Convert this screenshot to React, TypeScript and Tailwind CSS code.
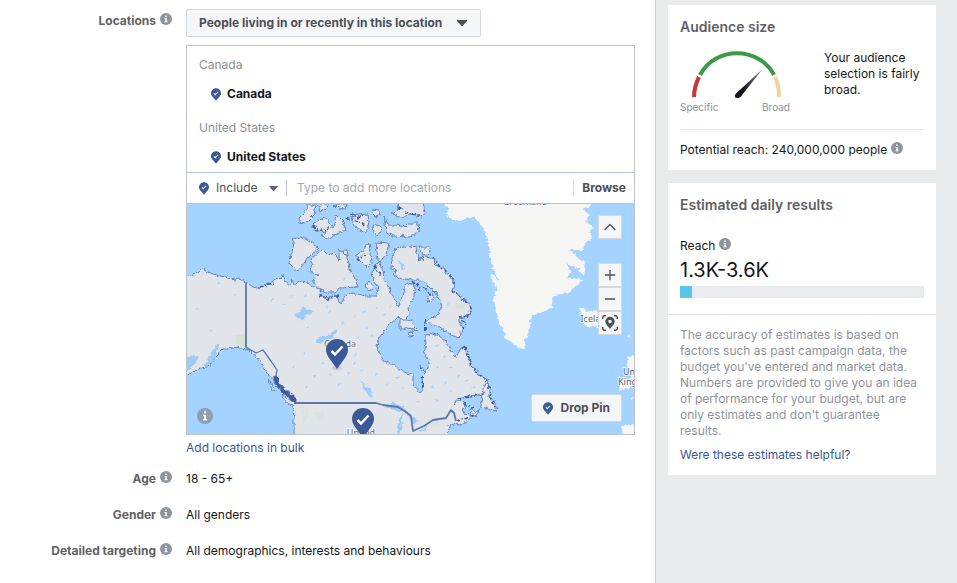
import React, { useState } from "react";
import { ChevronUp, Minus, Plus } from "lucide-react";

const locations = [
  { country: "Canada", name: "Canada" },
  { country: "United States", name: "United States" },
];

const targeting = [
  { label: "Age", value: "18 - 65+" },
  { label: "Gender", value: "All genders" },
  { label: "Detailed targeting", value: "All demographics, interests and behaviours" },
];

const dailyReach = { range: "1.3K-3.6K", percent: 5 };

const InfoIcon: React.FC<{ className?: string }> = ({ className }) => (
  <svg viewBox="0 0 12 12" className={className} aria-hidden="true">
    <circle cx="6" cy="6" r="6" fill="currentColor" />
    <path d="M4.6 5h2.2v3.3h.8v1H4.5v-1h.8V6h-.7zM5.2 2.5h1.6V4H5.2z" fill="#fff" />
  </svg>
);

const PinIcon: React.FC<{ className?: string }> = ({ className }) => (
  <svg viewBox="0 0 22 28" className={className} aria-hidden="true">
    <path
      d="M11 0C4.900 0 0 4.800 0 10.800c0 3 1.100 5.200 2.700 7.200L11 28l8.300-10c1.600-2 2.700-4.200 2.700-7.200C22 4.800 17.100 0 11 0z"
      fill="#3b5998"
    />
    <path d="M6.500 11.500l3 3 6-6.500" fill="none" stroke="#fff" strokeWidth="2.400" />
  </svg>
);

const CaretIcon: React.FC<{ className?: string }> = ({ className }) => (
  <svg viewBox="0 0 10 6" className={className} aria-hidden="true">
    <path d="M0 0h10v1L5.500 6h-1L0 1z" fill="currentColor" />
  </svg>
);

const LocateIcon: React.FC = () => (
  <svg viewBox="0 0 16 16" className="size-4" aria-hidden="true">
    <path
      d="M.8 4V2.500C.8 1.500 1.500.8 2.500.8H4M12 .8h1.500c1 0 1.700.7 1.700 1.700V4M15.200 12v1.500c0 1-.7 1.700-1.700 1.700H12M4 15.200H2.500c-1 0-1.700-.7-1.700-1.700V12"
      fill="none"
      stroke="currentColor"
      strokeWidth="1.400"
    />
    <path
      fillRule="evenodd"
      d="M8 1.800a4.700 4.700 0 0 0-4.700 4.700C3.300 9.300 6.200 11.300 8 14c1.800-2.700 4.700-4.700 4.700-7.500A4.700 4.700 0 0 0 8 1.800zm0 3a1.800 1.800 0 1 1 0 3.600 1.800 1.800 0 0 1 0-3.600z"
      fill="currentColor"
    />
  </svg>
);

// Selected countries get the darker outline, everything else stays pale
const selectedLand = [
  // mainland
  "M-3 74L6 70 11 69 15 65 21 68 27 70 32 72 39 73 47 76 52 75 59 78 66 83 73 85 79 81 86 77 91 75 95 74 96 71 98 77 103 81 105 76 107 81 112 78 121 79 127 83 134 85 132 91 139 94 149 91 154 101 157 93 164 89 179 92 189 92 192 83 186 76 185 68 190 59 196 64 197 76 202 83 206 93 211 102 216 93 219 79 226 80 228 86 226 96 221 103 222 111 217 116 211 114 204 119 197 127 192 134 190 142 192 149 197 157 207 161 217 168 226 171 226 181 232 188 236 186 235 172 241 164 242 157 237 149 239 139 238 131 246 130 252 132 259 137 264 147 269 153 274 144 277 143 281 151 284 162 291 169 302 177 298 187 292 191 282 192 271 194 267 201 273 196 278 201 276 209 289 211 282 216 272 221 264 220 259 233 107 233 107 214 106 201 102 197 96 189 89 182 86 174 81 171 77 164 71 154 62 146 59 145 49 143 42 145 36 145 32 149 27 154 24 162 14 164 9 166 1 171 -3 172z",
  // western arctic islands
  "M105 35L114 33 124 38 132 44 124 51 117 59 111 67 106 63 102 59 105 48 107 38z",
  "M133 47L123 56 126 61 123 68 131 71 126 76 131 84 139 88 149 88 152 84 171 83 169 76 164 68 161 56 156 48 152 46 152 56 147 49 141 51 136 46z",
  "M121 1L129 1 127 11 119 19 112 18 111 15 117 9z",
  "M134 14L141 16 146 24 149 11 156 18 159 26 152 29 142 34 134 31 139 28 127 26 126 21z",
  "M132 0L142 0 139 5 134 7z",
  "M147 0L160 0 158 5 151 4z",
  "M156 46L162 46 161 52 157 50z",
  // central arctic islands
  "M164 13L172 11 181 10 182 19 179 29 174 26 169 24 166 18z",
  "M169 51L177 46 182 39 184 49 185 59 180 64 174 58z",
  "M189 38L202 39 199 51 192 61 190 49z",
  "M186 5L192 6 194 11 189 13 185 9z",
  "M186 22L192 21 194 28 191 32 187 29z",
  "M179 82L182 78 187 84 182 88z",
  // eastern arctic islands
  "M197 11L201 21 209 21 217 23 221 19 231 19 232 28 222 33 206 32 199 28z",
  "M204 9L212 5 211 -2 236 -2 238 8 234 13 224 11 212 13z",
  "M217 42L209 44 205 54 204 64 209 66 207 71 212 74 224 76 232 76 237 79 244 84 249 89 253 96 255 103 251 111 240 116 238 119 250 121 257 126 264 131 273 134 276 124 271 116 276 113 282 112 284 101 277 96 269 89 266 86 268 79 264 73 257 66 249 61 246 54 237 53 231 54 229 44 224 43z",
  "M232 43L241 43 244 50 236 51z",
  "M240 92L245 89 247 94 242 98z",
  // Southampton and Coats
  "M213 115L222 115 226 121 231 126 226 125 221 124 213 127z",
  "M221 129L226 127 227 131 222 132z",
  // Newfoundland
  "M298 180L302 181 302 194 307 197 310 207 304 206 299 204 292 203 295 197z",
  "M283 205L289 208 292 206 289 212 284 211z",
  // Haida Gwaii and Vancouver Island
  "M81 174L85 180 88 188 85 186z",
  "M95 190L103 196 109 200 107 203 98 197z",
];

const otherLand = [
  // Greenland
  "M255 -3L261 6 259 13 271 17 286 13 292 18 298 29 301 39 304 59 312 76 307 93 309 109 312 117 319 134 331 144 337 145 338 136 344 124 342 117 346 111 356 108 364 104 367 91 381 89 396 76 380 73 384 68 379 59 389 63 396 71 398 59 382 46 396 46 399 38 406 34 402 28 407 23 399 18 404 11 397 6 407 -3z",
  "M303 71L309 73 313 80 308 82z",
  // Iceland
  "M392 104L396 104 399 108 409 106 416 112 414 119 408 123 399 122 396 117z",
  // British Isles
  "M441 153L450 151V180L443 176 446 168 440 162z",
  "M434 177L443 177 442 184 432 187z",
  // France and Spain
  "M434 222L450 220V233H437z",
  "M440 132L443 131 442 135z",
  "M442 196L450 190V194z",
];

const lakes = [
  "M106 111L113 108 117 103 121 107 127 106 124 110 118 112 117 116 109 113z",
  "M129 137L134 132 142 132 148 126 151 126 144 135 139 138 132 140z",
  "M173 176L178 181 182 184 186 193 182 192 177 185z",
  "M198 203L205 199 213 201 221 207 222 212 214 206 206 206z",
  "M212 214L217 211 215 219 213 231 210 229z",
  "M221 211L226 213 232 216 228 221 224 218z",
  "M-1 154L6 152 12 154 8 160 0 166z",
  "M21 154L31 139 33 141 29 150 25 160 17 164z",
  "M211 56L216 60 218 65 215 67 214 61z",
  "M231 228L240 222 238 228z",
];

// small ponds scattered over the northern interior
const ponds = [
  [31, 80], [46, 91], [9, 105], [22, 126], [84, 96], [95, 101], [103, 93], [117, 92], [138, 104], [141, 109],
  [119, 124], [154, 119], [165, 113], [176, 108], [188, 105], [196, 111], [202, 103], [178, 125], [184, 132], [170, 134],
  [168, 151], [166, 160], [160, 169], [174, 167], [188, 171], [198, 181], [209, 174], [215, 184], [150, 181], [142, 171],
  [134, 160], [116, 150], [126, 172], [118, 184], [105, 164], [248, 143], [256, 153], [250, 163], [262, 164], [270, 172],
  [256, 179], [244, 183], [278, 177], [263, 188], [285, 184], [248, 197], [229, 198], [240, 90], [260, 101], [155, 75],
];

const WorldMap: React.FC = () => (
  <svg
    viewBox="0 0 447 230"
    preserveAspectRatio="xMidYMid slice"
    className="block h-full w-full bg-[#a5d3ff]"
    role="img"
    aria-label="Map of selected locations"
  >
    <defs>
      <filter id="ragged" x="-5%" y="-5%" width="110%" height="110%">
        <feTurbulence type="fractalNoise" baseFrequency="0.22" numOctaves="3" seed="4" />
        <feDisplacementMap in="SourceGraphic" scale="5" xChannelSelector="R" yChannelSelector="G" />
      </filter>
    </defs>
    <g filter="url(#ragged)">
      <g fill="#f5f5f3">
        {otherLand.map((d) => (
          <path key={d} d={d} />
        ))}
      </g>
      <g fill="#e1e5e9" stroke="#6582b8" strokeWidth="1" strokeLinejoin="round">
        {selectedLand.map((d) => (
          <path key={d} d={d} />
        ))}
      </g>
      <g fill="#d5e3d5">
        <path d="M48 131L58 130 59 142 50 140z" />
        <path d="M268 98L276 100 277 105 270 106z" />
        <path d="M114 206L120 204 123 211 117 220z" opacity=".6" />
        <path d="M128 209L138 207 137 216 130 214z" opacity=".6" />
        <path d="M244 218L251 215 252 222 246 224z" opacity=".6" />
      </g>
      <g fill="#9ccbf7">
        {lakes.map((d) => (
          <path key={d} d={d} />
        ))}
        {ponds.map(([x, y]) => (
          <path key={`${x}-${y}`} d={`M${x} ${y}l2-2 1 1-2 2z`} opacity=".8" />
        ))}
      </g>
      <path
        d="M74 84L81 80 88 79M246 54L252 62 260 69 266 75 267 83M265 87L274 93 281 99 284 105 280 112 272 113M276 116L278 122 273 128M277 143L281 151 284 162 291 169 300 177M302 182L304 196 309 205M270 217L280 214 288 210M271 194L283 193 296 190M160 14L170 17 178 22M229 80L238 85 245 93M238 115L238 127M233 162L237 167M126 22L133 27 142 24M164 9L170 14 176 12M231 56L239 54M277 200L287 204M133 92L141 95 152 92M236 172L236 184M212 3L222 10 233 12M170 56L178 50M188 62L194 72M226 78L234 88"
        fill="none"
        stroke="#3f5c9e"
        strokeWidth="2"
        strokeDasharray="3 2 1 2"
      />
      <path d="M88 173L92 181 97 187 104 193 110 199" fill="none" stroke="#3f5c9e" strokeWidth="4" />
    </g>
    <g fill="none" stroke="#5b77ae" strokeWidth="1.800" strokeLinejoin="round">
      <path d="M59 79V143" />
      <path d="M59 143L69 149 76 146 84 157 90 166 89 172" strokeWidth="1.300" />
      <path d="M107 199H189L196 201 211 203 219 208 224 212 226 227 237 222 246 216 259 214 264 206 267 209 269 217" />
    </g>
    <g
      fontSize="9"
      fill="#646c78"
      stroke="#fff"
      strokeWidth="2"
      strokeOpacity=".7"
      paintOrder="stroke"
      textAnchor="middle"
      className="font-['Noto_Sans',sans-serif]"
    >
      <text x="338" y="1">Greenland</text>
      <text x="153" y="143">Canada</text>
      <text x="174" y="232">United</text>
      <text x="409" y="118">Iceland</text>
      <text x="436" y="171" textAnchor="start">Un</text>
      <text x="431" y="181" textAnchor="start">King</text>
    </g>
    <g>
      {[
        [139, 135],
        [165, 204],
      ].map(([x, y]) => (
        <g key={x} transform={`translate(${x} ${y})`}>
          <ellipse cx="11" cy="29" rx="5" ry="2" fill="#8b919c" opacity=".3" />
          <path
            d="M11 0C4.900 0 0 4.800 0 10.800c0 3 1.100 5.200 2.700 7.600L11 30l8.300-11.600c1.600-2.400 2.700-4.600 2.700-7.600C22 4.800 17.100 0 11 0z"
            fill="#3b5998"
          />
          <path d="M5.500 12l3.500 3.500 7.500-8" fill="none" stroke="#fff" strokeWidth="2.500" />
        </g>
      ))}
    </g>
  </svg>
);

const FieldLabel: React.FC<{ children: React.ReactNode }> = ({ children }) => (
  <div className="flex h-4 items-center justify-end gap-1 font-bold text-[#606163]">
    {children}
    <button type="button" aria-label="More information" className="mb-1">
      <InfoIcon className="size-3 text-[#8d949e]" />
    </button>
  </div>
);

const mapButton =
  "flex size-6 items-center justify-center border border-[#d3d7de] bg-[#f5f6f7] text-[#4b4f56]";

const AudienceGauge: React.FC = () => (
  <svg viewBox="0 0 96 50" className="h-[50px] w-24" role="img" aria-label="Fairly broad">
    <defs>
      <linearGradient id="needle" x1="0" y1="1" x2="1" y2="0">
        <stop offset="0.300" stopColor="#10151c" />
        <stop offset="1" stopColor="#999" />
      </linearGradient>
    </defs>
    <g fill="none" strokeWidth="4">
      <path d="M7 49C7 42 9 35 12 29" stroke="#cc3439" />
      <path d="M13 27C28-2 72-2 87 27" stroke="#399c44" />
      <path d="M88 29C91 35 92 42 92 49" stroke="#f7cf9b" />
    </g>
    <path d="M49 45.500L76 20.500 53.500 49C50 52 46 49 49 45.500z" fill="url(#needle)" />
  </svg>
);

const App: React.FC = () => {
  const [scope, setScope] = useState("recent");
  const [mode, setMode] = useState("include");
  const [query, setQuery] = useState("");

  return (
    <div className="flex min-h-screen bg-white font-[Inter,'Liberation_Sans',sans-serif] text-xs leading-4 text-[#141619]">
      <main className="min-w-0 flex-1 pr-5 pb-4">
        <div className="grid grid-cols-[172px_minmax(0,1fr)] gap-x-[14px] pt-[9px]">
          <div className="pt-1">
            <FieldLabel>
              <label htmlFor="scope">Locations</label>
            </FieldLabel>
          </div>

          <div>
            <div className="relative inline-block align-top">
              <select
                id="scope"
                value={scope}
                onChange={(e) => setScope(e.target.value)}
                className="block h-7 w-[295px] appearance-none rounded-xs border border-[#d3d7de] bg-[#f5f6f7] pl-3 font-bold text-[#4b4f56]"
              >
                <option value="recent">People living in or recently in this location</option>
                <option value="living">People living in this location</option>
              </select>
              <CaretIcon className="pointer-events-none absolute top-[11px] right-[14px] h-[6px] w-[10px] text-[#4b4f56]" />
            </div>

            <div className="mt-2 border border-[#bec3c9]">
              <ul className="space-y-[18px] px-3 pt-[11px] pb-[7px]">
                {locations.map((location) => (
                  <li key={location.name}>
                    <div className="text-[#8c8f94]">{location.country}</div>
                    <div className="mt-[13px] flex items-center gap-[6px] pl-3 font-bold">
                      <PinIcon className="h-[13px] w-[10px]" />
                      {location.name}
                    </div>
                  </li>
                ))}
              </ul>

              <div className="flex h-8 items-center border-y border-[#b4c3df] px-3">
                <PinIcon className="h-[13px] w-[10px]" />
                <div className="relative ml-[7px]">
                  <select
                    aria-label="Include or exclude"
                    value={mode}
                    onChange={(e) => setMode(e.target.value)}
                    className="block w-[62px] appearance-none text-[#4b4f56]"
                  >
                    <option value="include">Include</option>
                    <option value="exclude">Exclude</option>
                  </select>
                  <CaretIcon className="pointer-events-none absolute top-[6px] right-0 h-[5px] w-[9px] text-[#606770]" />
                </div>
                <input
                  type="text"
                  aria-label="Add locations"
                  placeholder="Type to add more locations"
                  value={query}
                  onChange={(e) => setQuery(e.target.value)}
                  className="ml-2 min-w-0 flex-1 border-l border-[#b4c3df] pl-[10px] outline-none placeholder:text-[#a5a8ad]"
                />
                <button
                  type="button"
                  className="-mr-1 border-l border-[#dddfe2] pl-2 font-bold text-[#4b4f56]"
                >
                  Browse
                </button>
              </div>

              <div className="relative h-[230px]">
                <WorldMap />
                <div className="absolute top-[11px] right-3">
                  <button type="button" aria-label="Collapse map" className={mapButton}>
                    <ChevronUp className="size-5" strokeWidth={1.5} />
                  </button>
                  <div className="mt-6">
                    <button type="button" aria-label="Zoom in" className={mapButton}>
                      <Plus className="size-4" strokeWidth={2} />
                    </button>
                    <button type="button" aria-label="Zoom out" className={mapButton}>
                      <Minus className="size-4" strokeWidth={2} />
                    </button>
                    <button type="button" aria-label="Current location" className={mapButton}>
                      <LocateIcon />
                    </button>
                  </div>
                </div>
                <button
                  type="button"
                  aria-label="Map information"
                  className="absolute bottom-[10px] left-[10px]"
                >
                  <InfoIcon className="size-4 text-[#8e9eb2]" />
                </button>
                <button
                  type="button"
                  className="absolute right-3 bottom-3 flex h-7 items-center gap-[7px] rounded-xs border border-[#d3d7de] bg-[#f5f6f7] px-[11px] font-bold text-[#4b4f56]"
                >
                  <PinIcon className="h-[13px] w-[10px]" />
                  Drop Pin
                </button>
              </div>
            </div>

            <a href="#bulk" className="mt-[5px] inline-block text-[#385898]">
              Add locations in bulk
            </a>
          </div>
        </div>

        <dl className="mt-[15px] space-y-5">
          {targeting.map((item) => (
            <div key={item.label} className="grid grid-cols-[172px_minmax(0,1fr)] gap-x-[14px]">
              <dt>
                <FieldLabel>{item.label}</FieldLabel>
              </dt>
              <dd>{item.value}</dd>
            </div>
          ))}
        </dl>
      </main>

      <aside className="w-[302px] shrink-0 space-y-[13px] border-l border-[#ccced2] bg-[#e9eaec] pt-[5px] pr-[21px] pl-3">
        <section className="bg-white px-3 pt-[13px] pb-3">
          <h2 className="text-sm leading-[18px] font-semibold text-[#606163]">Audience size</h2>
          <div className="mt-3 flex justify-between">
            <div className="w-[110px]">
              <div className="flex justify-center">
                <AudienceGauge />
              </div>
              <div className="mt-px flex justify-between text-[10px] text-[#8c8f94]">
                <span>Specific</span>
                <span>Broad</span>
              </div>
            </div>
            <p className="w-[100px] pt-[2px]">Your audience selection is fairly broad.</p>
          </div>
          <div className="mt-[14px] flex items-center gap-1 border-t border-[#e5e6e9] pt-3">
            Potential reach: 240,000,000 people
            <button type="button" aria-label="About potential reach" className="mb-1">
              <InfoIcon className="size-3 text-[#8d949e]" />
            </button>
          </div>
        </section>

        <section className="bg-white">
          <div className="border-b border-[#e5e6e9] px-3 pt-[13px] pb-4">
            <h2 className="text-sm leading-[18px] font-semibold text-[#606163]">
              Estimated daily results
            </h2>
            <div className="mt-6 flex h-4 items-center gap-1">
              Reach
              <button type="button" aria-label="About reach" className="mb-1">
                <InfoIcon className="size-3 text-[#8d949e]" />
              </button>
            </div>
            <div className="mt-1 text-xl leading-6">{dailyReach.range}</div>
            <div className="mt-1 h-3 bg-[#e9ebee]">
              <div className="h-full bg-[#59c5ea]" style={{ width: `${dailyReach.percent}%` }} />
            </div>
          </div>
          <div className="px-3 pt-3 pb-3">
            <p className="text-[#90949c]">
              The accuracy of estimates is based on factors such as past campaign data, the budget
              you've entered and market data. Numbers are provided to give you an idea of
              performance for your budget, but are only estimates and don't guarantee results.
            </p>
            <a href="#feedback" className="mt-2 inline-block text-[#385898]">
              Were these estimates helpful?
            </a>
          </div>
        </section>
      </aside>
    </div>
  );
};

export default App;
